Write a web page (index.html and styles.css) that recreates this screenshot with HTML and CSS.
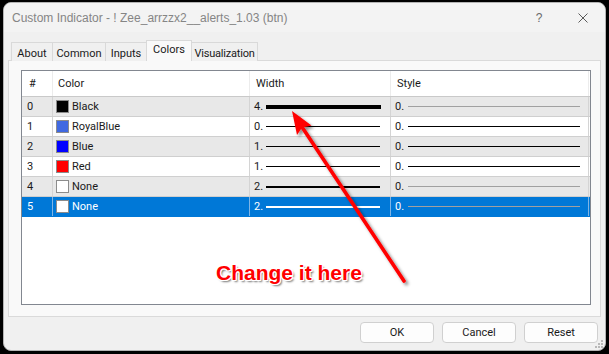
FILE: index.html
```html
<!DOCTYPE html>
<html>
<head>
<meta charset="utf-8">
<link rel="stylesheet" href="styles.css">
</head>
<body>
<div class="window">
  <div class="titlebar">
    <span class="title">Custom Indicator - ! Zee_arrzzx2__alerts_1.03 (btn)</span>
    <span class="help">?</span>
    <svg class="close" width="10" height="10" viewBox="0 0 10 10"><path d="M0.5 0.5L9.5 9.5M9.5 0.5L0.5 9.5" stroke="#5a5a5a" stroke-width="1" fill="none"/></svg>
  </div>
  <div class="tabs">
    <div class="tab t-about">About</div>
    <div class="tab t-common">Common</div>
    <div class="tab t-inputs">Inputs</div>
    <div class="tab t-colors active">Colors</div>
    <div class="tab t-vis">Visualization</div>
  </div>
  <div class="panel">
    <div class="list">
      <div class="row head">
        <div class="c c1">#</div>
        <div class="c c2">Color</div>
        <div class="c c3">Width</div>
        <div class="c c4">Style</div>
        <div class="c c5"></div>
      </div>
      <div class="row alt">
        <div class="c c1">0</div>
        <div class="c c2"><span class="sw sw-black"></span>Black</div>
        <div class="c c3"><span class="num">4.</span><span class="ln w4 long"></span></div>
        <div class="c c4"><span class="num">0.</span><span class="sl gray"></span></div>
        <div class="c c5"></div>
      </div>
      <div class="row">
        <div class="c c1">1</div>
        <div class="c c2"><span class="sw sw-royal"></span>RoyalBlue</div>
        <div class="c c3"><span class="num">0.</span><span class="ln w1"></span></div>
        <div class="c c4"><span class="num">0.</span><span class="sl"></span></div>
        <div class="c c5"></div>
      </div>
      <div class="row alt">
        <div class="c c1">2</div>
        <div class="c c2"><span class="sw sw-blue"></span>Blue</div>
        <div class="c c3"><span class="num">1.</span><span class="ln w1"></span></div>
        <div class="c c4"><span class="num">0.</span><span class="sl"></span></div>
        <div class="c c5"></div>
      </div>
      <div class="row">
        <div class="c c1">3</div>
        <div class="c c2"><span class="sw sw-red"></span>Red</div>
        <div class="c c3"><span class="num">1.</span><span class="ln w1"></span></div>
        <div class="c c4"><span class="num">0.</span><span class="sl"></span></div>
        <div class="c c5"></div>
      </div>
      <div class="row alt">
        <div class="c c1">4</div>
        <div class="c c2"><span class="sw sw-none"></span>None</div>
        <div class="c c3"><span class="num">2.</span><span class="ln w2"></span></div>
        <div class="c c4"><span class="num">0.</span><span class="sl gray"></span></div>
        <div class="c c5"></div>
      </div>
      <div class="row sel">
        <div class="c c1">5</div>
        <div class="c c2"><span class="sw sw-none"></span>None</div>
        <div class="c c3"><span class="num">2.</span><span class="ln w2 white"></span></div>
        <div class="c c4"><span class="num">0.</span><span class="sl gray"></span></div>
        <div class="c c5"></div>
      </div>
    </div>
  </div>
  <div class="buttons">
    <div class="btn">OK</div>
    <div class="btn">Cancel</div>
    <div class="btn">Reset</div>
  </div>
  <svg class="grip" width="8" height="8" viewBox="0 0 8 8">
    <rect x="6" y="0" width="2" height="2" fill="#b8b8b8"/>
    <rect x="3" y="3" width="2" height="2" fill="#b8b8b8"/>
    <rect x="6" y="3" width="2" height="2" fill="#b8b8b8"/>
    <rect x="0" y="6" width="2" height="2" fill="#b8b8b8"/>
    <rect x="3" y="6" width="2" height="2" fill="#b8b8b8"/>
    <rect x="6" y="6" width="2" height="2" fill="#b8b8b8"/>
  </svg>
</div>
<svg class="arrow" width="609" height="354" viewBox="0 0 609 354">
  <defs>
    <filter id="sh" x="-20%" y="-20%" width="140%" height="140%">
      <feDropShadow dx="2.5" dy="2.5" stdDeviation="1.6" flood-color="#000" flood-opacity="0.45"/>
    </filter>
  </defs>
  <g filter="url(#sh)">
    <line x1="404" y1="281" x2="302" y2="127" stroke="#ff0000" stroke-width="3.6" stroke-linecap="round"/>
    <polygon points="292,111 311.5,125.5 302,127.5 297,135" fill="#ff0000"/>
  </g>
</svg>
<div class="callout">Change it here</div>
</body>
</html>
```

FILE: styles.css
```css
* { box-sizing: border-box; }
html, body { margin: 0; padding: 0; }
body {
  background: #000;
  width: 609px;
  height: 354px;
  overflow: hidden;
  font-family: Roboto, "Liberation Sans", sans-serif;
  font-size: 11px;
  color: #000;
  position: relative;
}
.window {
  position: relative;
  margin: 2px 0 0 3px;
  width: 603px;
  height: 349px;
  border: 1px solid #b4b4b4;
  border-radius: 8px;
  background: #f0f0f0;
  overflow: hidden;
  display: flex;
  flex-direction: column;
}
.titlebar {
  height: 29px;
  flex: none;
  background: #f3f3f3;
  display: flex;
  align-items: center;
  padding-left: 8px;
  padding-right: 17px;
}
.title {
  font-family: "Liberation Sans", Arial, sans-serif;
  font-size: 12px;
  color: #858585;
  white-space: nowrap;
}
.help {
  margin-left: auto;
  width: 10px;
  text-align: center;
  font-family: "Liberation Sans", sans-serif;
  font-size: 12px;
  color: #6a6a6a;
}
.close { margin-left: 34px; display: block; }
.tabs {
  display: flex;
  align-items: flex-end;
  height: 21px;
  margin-top: 8px;
  padding-left: 7px;
  position: relative;
  z-index: 2;
  margin-bottom: -1px;
}
.tab {
  height: 19px;
  border: 1px solid #d9d9d9;
  border-bottom: none;
  background: #f0f0f0;
  margin-left: -1px;
  display: flex;
  align-items: center;
  justify-content: center;
  padding-top: 2px;
  white-space: nowrap;
  color: #1a1a1a;
}
.t-about { width: 42px; margin-left: 0; }
.t-common { width: 54px; }
.t-inputs { width: 42px; }
.t-colors { width: 46px; }
.t-vis { width: 67px; letter-spacing: -0.2px; }
.tab.active {
  height: 21px;
  background: #f9f9f9;
  padding-top: 0;
  padding-bottom: 3px;
  position: relative;
  z-index: 3;
}
.panel {
  flex: none;
  margin-left: 4px;
  width: 593px;
  height: 257px;
  border: 1px solid #dadada;
  background: #f9f9f9;
  padding: 9px 9px 11px 12px;
}
.list {
  width: 570px;
  height: 235px;
  border: 1px solid #828790;
  background: #fff;
}
.row {
  display: flex;
  height: 20px;
  border-bottom: 1px solid #cfcfcf;
  background: #fff;
  color: #1a1a1a;
}
.row.alt { background: #e8e8e8; }
.row.head {
  height: 26px;
  border-bottom: 1px solid #c9c9c9;
  background: #fff;
}
.row.sel { background: #0078d7; color: #fff; border-bottom-color: #0078d7; }
.c {
  display: flex;
  align-items: center;
  border-right: 1px solid #d4d4d4;
  white-space: nowrap;
  overflow: hidden;
}
.head .c { border-right-color: #ececec; }
.sel .c { border-right-color: #7fb5e6; }
.c1 { width: 31px; padding-left: 5px; }
.c2 { width: 197px; padding-left: 3px; }
.c3 { width: 141px; padding-left: 4px; }
.c4 { width: 198px; padding-left: 4px; }
.c5 { flex: 1; border-right: none; }
.head .c1 { padding-left: 7px; }
.head .c2 { padding-left: 5px; }
.head .c3 { padding-left: 6px; }
.head .c4 { padding-left: 6px; }
.sw {
  width: 13px;
  height: 13px;
  border: 1px solid #8c8c8c;
  margin-right: 3px;
  flex: none;
}
.sw-black { background: #000; }
.sw-royal { background: #4169e1; }
.sw-blue { background: #0000ff; }
.sw-red { background: #ff0000; }
.sw-none { background: #fff; }
.num { width: 12px; flex: none; }
.c4 .num { width: 13px; }
.ln { width: 114px; background: #000; flex: none; }
.ln.long { width: 115px; }
.ln.w1 { height: 1px; }
.ln.w2 { height: 2px; }
.ln.w4 { height: 4px; }
.ln.white { background: #fff; }
.sl { width: 172px; height: 1px; background: #000; flex: none; }
.sl.gray { background: #a0a0a0; }
.buttons {
  display: flex;
  justify-content: flex-end;
  gap: 8px;
  margin-top: 5px;
  padding-right: 7px;
}
.btn {
  width: 74px;
  height: 21px;
  border: 1px solid #d0d0d0;
  border-radius: 4px;
  background: #fdfdfd;
  display: flex;
  align-items: center;
  justify-content: center;
  color: #1a1a1a;
}
.grip { position: absolute; right: 2px; bottom: 2px; }
.arrow { position: absolute; left: 0; top: 0; pointer-events: none; }
.callout {
  position: absolute;
  left: 216px;
  top: 262px;
  font-family: "Liberation Sans", Arial, sans-serif;
  font-weight: bold;
  font-size: 21px;
  line-height: 21px;
  color: #ff0000;
  white-space: nowrap;
  text-shadow:
    1px 0 0 #fff, -1px 0 0 #fff, 0 1px 0 #fff, 0 -1px 0 #fff,
    1px 1px 0 #fff, -1px -1px 0 #fff, 1px -1px 0 #fff, -1px 1px 0 #fff,
    2px 2px 2px rgba(0,0,0,0.55);
}
```
